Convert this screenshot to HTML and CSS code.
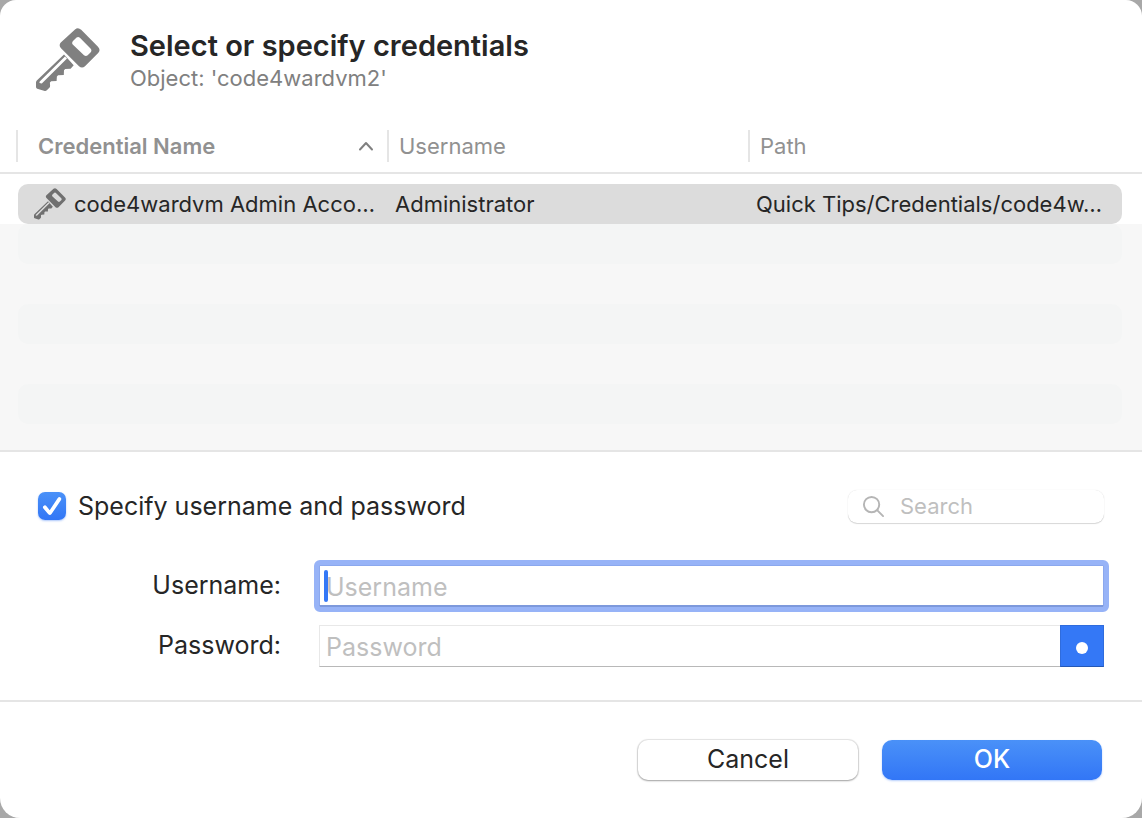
FILE: index.html
```html
<!DOCTYPE html>
<html lang="en">
<head>
    <meta charset="UTF-8">
    <meta name="viewport" content="width=device-width, initial-scale=1.0">
    <title>Select or specify credentials</title>
    <link rel="stylesheet" href="styles.css">
</head>
<body>
    <svg class="defs" width="0" height="0" aria-hidden="true">
        <symbol id="key" viewBox="0 0 64 64">
            <path fill-rule="evenodd" d="M39 1.500q3-2.600 6.200.3l16.800 17q3 3.200.2 6.200L49 38.300q-3 2.600-6 0L25 20.200q-2.600-3-.2-5.800zM40.600 9.600l-3.600 3.500q-1.700 1.900 0 3.700l11 10.400q1.900 1.600 3.700 0l2.800-2.800q1.800-1.900 0-3.800L43.900 9.800q-1.700-1.500-3.300-.2z"/>
            <path fill-rule="evenodd" d="M28 26.500L.8 52.600q-.8.8-.8 2V59q0 1.300 1.200 1.700l7.600 2.300q1.200.2 2-.7l2.600-2.500q.7-.7.700-1.800l-.2-3.500 1.300-1.200 5.400-.2.300-4.700 1.200-1.200 5.700-.3.200-4.600 1.200-1.200 5.400-.3 3.100-3.500zM29 28.400l2 2L5.800 55.600l-2.400-.6.300-1.600z"/>
        </symbol>
    </svg>

    <main class="dialog">
        <header class="dialog-header">
            <svg class="key-large"><use href="#key"/></svg>
            <div>
                <h1>Select or specify credentials</h1>
                <p>Object: 'code4wardvm2'</p>
            </div>
        </header>

        <section class="list">
            <table>
                <thead>
                    <tr>
                        <th class="sorted" aria-sort="ascending">Credential Name
                            <svg class="sort-icon" viewBox="0 0 16 10"><path d="M2 8.500l6-6.500 6 6.500"/></svg>
                        </th>
                        <th>Username</th>
                        <th>Path</th>
                    </tr>
                </thead>
                <tbody>
                    <tr>
                        <td class="name"><svg class="key-small"><use href="#key"/></svg><span>code4wardvm Admin Acco…</span></td>
                        <td>Administrator</td>
                        <td>Quick Tips/Credentials/code4w…</td>
                    </tr>
                </tbody>
            </table>
            <div class="empty-rows">
                <div class="stripe"></div>
                <div class="stripe"></div>
                <div class="stripe"></div>
            </div>
        </section>

        <form id="credentials" class="specify">
            <div class="toolbar">
                <label class="check"><input type="checkbox" checked>Specify username and password</label>
                <div class="search">
                    <svg viewBox="0 0 24 24"><circle cx="10" cy="10" r="8"/><path d="M16 16l6 6"/></svg>
                    <input type="search" placeholder="Search" aria-label="Search">
                </div>
            </div>
            <div class="fields">
                <label for="username">Username:</label>
                <div class="field focused">
                    <input type="text" id="username" placeholder="Username">
                    <span class="caret"></span>
                </div>
                <label for="password">Password:</label>
                <div class="field">
                    <input type="password" id="password" placeholder="Password">
                    <button type="button" class="reveal" aria-label="Show password"><span class="dot"></span></button>
                </div>
            </div>
        </form>

        <footer class="dialog-footer">
            <button type="button" class="btn">Cancel</button>
            <button type="submit" form="credentials" class="btn primary">OK</button>
        </footer>
    </main>
</body>
</html>
```
FILE: styles.css
```css
* {
    box-sizing: border-box;
}
body {
    margin: 0;
    background: #a8a8a8;
    color: #262626;
    font-family: Inter, "Liberation Sans", sans-serif;
    font-size: 25px;
}
input, button {
    font: inherit;
    color: inherit;
}
.defs {
    position: absolute;
}
.dialog {
    display: flex;
    flex-direction: column;
    min-height: 100vh;
    background: #fff;
    border-radius: 16px 16px 20px 20px;
    overflow: hidden;
}

/* header */
.dialog-header {
    display: flex;
    gap: 30px;
    padding: 28px 36px 0;
    height: 118px;
}
.key-large {
    width: 64px;
    height: 64px;
    fill: #808080;
}
h1 {
    margin: 0;
    font-size: 29px;
    line-height: 36px;
    font-weight: 600;
}
.dialog-header p {
    margin: 0;
    font-size: 22px;
    line-height: 28px;
    color: #808080;
}

/* credential list */
.list {
    flex: 1;
    display: flex;
    flex-direction: column;
    border-bottom: 2px solid #e5e5e5;
}
table {
    display: block;
    font-size: 22px;
}
thead, tbody {
    display: block;
}
tr {
    display: grid;
    grid-template-columns: 371px 361px 1fr;
}
thead tr {
    padding: 12px 0 10px 16px;
    border-bottom: 2px solid #e5e5e5;
}
th {
    padding: 0 10px;
    border-left: 2px solid #e5e5e5;
    line-height: 32px;
    font-weight: 400;
    text-align: left;
    color: #919191;
}
.sorted {
    display: flex;
    align-items: center;
    justify-content: space-between;
    padding: 0 13px 0 20px;
    font-weight: 600;
}
.sort-icon {
    width: 16px;
    height: 10px;
    fill: none;
    stroke: #808080;
    stroke-width: 2;
    stroke-linecap: round;
    stroke-linejoin: round;
}
tbody {
    padding: 10px 20px 0 18px;
}
tbody tr {
    height: 40px;
    border-radius: 10px;
    background: #dcdcdc;
}
td {
    padding: 0 6px;
    line-height: 40px;
    white-space: nowrap;
    overflow: hidden;
}
.name {
    display: flex;
    align-items: center;
    gap: 8px;
    padding-left: 16px;
}
.key-small {
    flex: none;
    width: 32px;
    height: 32px;
    fill: #707070;
}
.empty-rows {
    flex: 1;
    display: flex;
    flex-direction: column;
    gap: 40px;
    padding: 0 20px 26px 18px;
    background: #f7f7f7;
}
.stripe {
    height: 40px;
    border-radius: 10px;
    background: #f4f5f5;
}

/* username and password */
.specify {
    padding: 37px 38px 33px;
    border-bottom: 2px solid #e5e5e5;
}
.toolbar {
    display: flex;
    align-items: center;
    justify-content: space-between;
    margin-bottom: 42px;
}
.check {
    display: flex;
    align-items: center;
    gap: 12px;
    line-height: 34px;
}
.check input {
    appearance: none;
    width: 28px;
    height: 28px;
    margin: 0;
    border-radius: 7px;
    background: linear-gradient(#4a91f8, #3276f6);
    box-shadow: 0 1px 2px rgba(50, 118, 246, 0.4);
}
.check input:checked::before {
    content: "";
    display: block;
    width: 28px;
    height: 28px;
    background: #fff;
    clip-path: path("M5.200 16.200Q4.200 14.200 6.300 13.400Q7.600 13 8.500 14.200L11.700 18.200L19.800 5.900Q21 4.500 22.500 5.400Q23.800 6.400 23 8L13.500 22.100Q12 23.800 10.300 22.200Z");
}
.search {
    display: flex;
    align-items: center;
    gap: 15px;
    width: 256px;
    height: 33px;
    padding: 0 14px;
    border-radius: 9px;
    box-shadow: 0 0 1px rgba(0, 0, 0, 0.15), 0 1px 1px rgba(0, 0, 0, 0.15);
}
.search svg {
    flex: none;
    width: 23px;
    height: 23px;
    fill: none;
    stroke: #b5b5b5;
    stroke-width: 2;
    stroke-linecap: round;
}
.search input {
    width: 100%;
    min-width: 0;
    padding: 0;
    border: 0;
    outline: 0;
    background: none;
    font-size: 22px;
}
::placeholder {
    color: #bfbfbf;
    opacity: 1;
}
.fields {
    display: grid;
    grid-template-columns: 243px 1fr;
    gap: 18px 38px;
}
.fields label {
    line-height: 40px;
    text-align: right;
}
.field {
    position: relative;
    display: flex;
    height: 42px;
    border: 1px solid #e8e8e8;
    border-bottom-color: #b8b8b8;
}
.field input {
    flex: 1;
    min-width: 0;
    padding: 2px 6px 0;
    border: 0;
    outline: 0;
    background: none;
}
.focused {
    border: 1px solid #8ba8ee;
    border-bottom: 2px solid #7d99dc;
    outline: 5px solid #97b3f7;
    border-radius: 1px;
}
.caret {
    position: absolute;
    left: 4px;
    top: 4px;
    width: 4px;
    height: 32px;
    border-radius: 2px;
    background: #3478f6;
}
.reveal {
    display: flex;
    align-items: center;
    justify-content: center;
    width: 44px;
    margin: -1px;
    padding: 4px 0 0;
    border: 1px solid #2f6cdd;
    border-bottom-color: #2558b5;
    background: #3478f6;
}
.dot {
    width: 12px;
    height: 12px;
    border-radius: 50%;
    background: #fff;
}

/* buttons */
.dialog-footer {
    display: flex;
    justify-content: flex-end;
    gap: 24px;
    padding: 38px 40px;
}
.btn {
    width: 220px;
    height: 40px;
    padding: 0 0 2px;
    border: 0;
    border-radius: 10px;
    background: #fff;
    box-shadow: 0 0 1px 1px rgba(0, 0, 0, 0.1), 0 1px 2px rgba(0, 0, 0, 0.3);
}
.primary {
    background: linear-gradient(#4a91f8, #3276f6);
    box-shadow: 0 1px 2px rgba(50, 118, 246, 0.35);
    color: #fff;
    font-weight: 500;
}
```
